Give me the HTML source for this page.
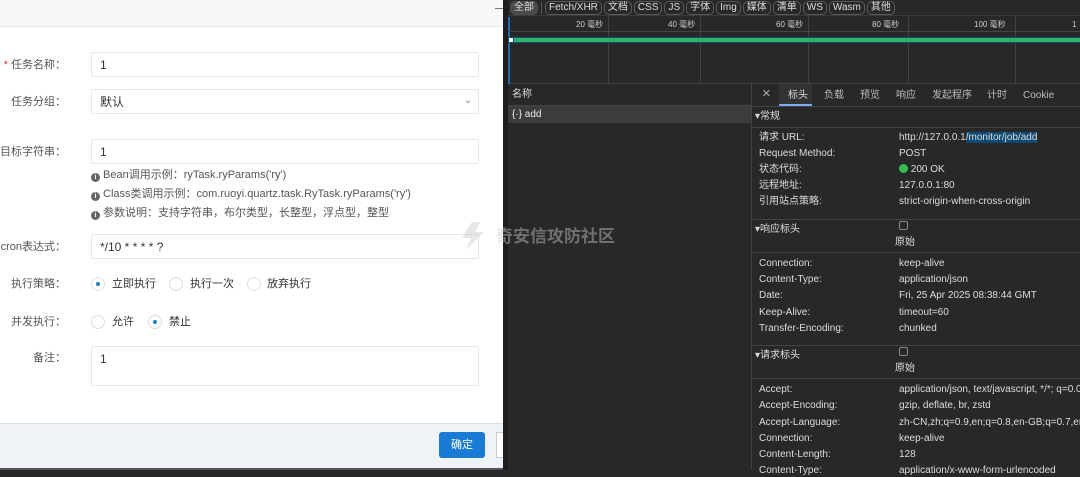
<!DOCTYPE html>
<html><head><meta charset="utf-8"><style>
*{margin:0;padding:0;box-sizing:border-box}
body{width:1080px;height:470px;overflow:hidden;position:relative;font-family:"Liberation Sans","Noto Sans CJK SC",sans-serif;background:#282828;line-height:13px}
.a{position:absolute;white-space:nowrap}
#L{position:absolute;left:0;top:0;width:503px;height:470px;background:#fff}
.lbl{position:absolute;right:437px;font-size:11px;color:#555;width:120px;text-align:right;line-height:14px}
.inp{position:absolute;left:91px;width:388px;height:25px;border:1px solid #e5e6e7;border-radius:2px;font-size:12px;color:#333;padding:5px 8px;line-height:14px}
.hint{position:absolute;left:91px;font-size:11px;color:#555;line-height:13px}
.hint b{display:inline-block;width:9px;height:9px;border-radius:50%;background:#666;color:#fff;font-size:7px;text-align:center;line-height:9px;margin-right:3px;vertical-align:-1px}
.rad{position:absolute;width:14px;height:14px;border:1px solid #ddd;border-radius:50%}
.rad.on::after{content:"";position:absolute;left:4px;top:4px;width:4px;height:4px;border-radius:50%;background:#1c84c6}
.rt{position:absolute;font-size:11px;color:#333;line-height:14px}
#D{position:absolute;left:508px;top:0;width:572px;height:470px;background:#282828;color:#ddd;font-size:10px}
.chip{display:inline-block;border:1px solid #5a5a5a;border-radius:5px;padding:0 3px;height:14px;line-height:12px;margin-right:2px;font-size:10px;color:#ddd;vertical-align:top}
.k,.v{position:absolute;color:#ddd;line-height:12px}
.k{left:7px}.v{left:147px}
.sec{position:absolute;left:0;width:329px;border-top:1px solid #444}
.tab{position:absolute;top:6px;line-height:12px}
</style></head><body>
<div id="L">
 <div class="a" style="left:0;top:0;width:503px;height:27px;background:#f8f8f8;border-bottom:1px solid #e7e7e7"></div>
 <div class="a" style="left:495px;top:8px;width:8px;height:1px;background:#777"></div>
 <div class="lbl" style="top:58px"><span style="color:#e33">* </span>任务名称：</div>
 <div class="inp" style="top:52px">1</div>
 <div class="lbl" style="top:95px">任务分组：</div>
 <div class="inp" style="top:89px">默认<span style="position:absolute;right:6px;top:4px;color:#888;font-size:10px">&#8964;</span></div>
 <div class="lbl" style="top:145px">用目标字符串：</div>
 <div class="inp" style="top:139px">1</div>
 <div class="hint" style="top:169px"><b>i</b>Bean调用示例：ryTask.ryParams('ry')</div>
 <div class="hint" style="top:188px"><b>i</b>Class类调用示例：com.ruoyi.quartz.task.RyTask.ryParams('ry')</div>
 <div class="hint" style="top:207px"><b>i</b>参数说明：支持字符串，布尔类型，长整型，浮点型，整型</div>
 <div class="lbl" style="top:240px">cron表达式：</div>
 <div class="inp" style="top:234px">*/10 * * * * ?</div>
 <div class="lbl" style="top:277px">执行策略：</div>
 <div class="rad on" style="left:91px;top:277px"></div><div class="rt" style="left:112px;top:277px">立即执行</div>
 <div class="rad" style="left:169px;top:277px"></div><div class="rt" style="left:190px;top:277px">执行一次</div>
 <div class="rad" style="left:247px;top:277px"></div><div class="rt" style="left:267px;top:277px">放弃执行</div>
 <div class="lbl" style="top:315px">并发执行：</div>
 <div class="rad" style="left:91px;top:315px"></div><div class="rt" style="left:112px;top:315px">允许</div>
 <div class="rad on" style="left:148px;top:315px"></div><div class="rt" style="left:169px;top:315px">禁止</div>
 <div class="lbl" style="top:351px">备注：</div>
 <div class="inp" style="top:346px;height:40px">1</div>
 <div class="a" style="left:0;top:423px;width:503px;height:45px;background:#eff2f6;border-top:1px solid #ddd"></div>
 <div class="a" style="left:439px;top:432px;width:46px;height:26px;background:#1a7bd5;border-radius:3px;color:#fff;font-size:11px;text-align:center;line-height:26px">确定</div>
 <div class="a" style="left:496px;top:432px;width:8px;height:26px;background:#fff;border:1px solid #ccc"></div>
 <div class="a" style="left:0;top:468px;width:503px;height:2px;background:#555"></div>
</div>
<div class="a" style="left:503px;top:0;width:5px;height:470px;background:#1e1e1e"></div>
<div id="D">
 <div class="a" style="left:0;top:0;width:572px;height:16px;background:#282828;border-bottom:1px solid #3a3a3a;padding:1px 0 0 2px;line-height:14px">
  <span class="chip" style="background:#4a4a4a;border-color:#4a4a4a">全部</span><span style="display:inline-block;width:1px;height:12px;background:#555;margin:1px 3px 0 1px;vertical-align:top"></span><span class="chip">Fetch/XHR</span><span class="chip">文档</span><span class="chip">CSS</span><span class="chip">JS</span><span class="chip">字体</span><span class="chip">Img</span><span class="chip">媒体</span><span class="chip">清单</span><span class="chip">WS</span><span class="chip">Wasm</span><span class="chip">其他</span>
 </div>
 <div class="a" style="left:0;top:17px;width:572px;height:67px;border-bottom:1px solid #444">
  <div class="a" style="left:0;top:0;width:2px;height:67px;background:#1a6fb5"></div>
  <div class="a" style="left:100px;top:0;width:1px;height:67px;background:#444"></div>
  <div class="a" style="left:192px;top:0;width:1px;height:67px;background:#444"></div>
  <div class="a" style="left:300px;top:0;width:1px;height:67px;background:#444"></div>
  <div class="a" style="left:400px;top:0;width:1px;height:67px;background:#444"></div>
  <div class="a" style="left:507px;top:0;width:1px;height:67px;background:#444"></div>
  <div class="a" style="left:0;top:0;width:572px;height:15px;border-bottom:1px solid #444;font-size:8px;color:#ccc;line-height:10px">
   <span class="a" style="left:68px;top:3px">20 毫秒</span><span class="a" style="left:160px;top:3px">40 毫秒</span><span class="a" style="left:268px;top:3px">60 毫秒</span><span class="a" style="left:364px;top:3px">80 毫秒</span><span class="a" style="left:466px;top:3px">100 毫秒</span><span class="a" style="left:564px;top:3px">1</span>
  </div>
  <div class="a" style="left:0;top:20px;width:572px;height:6px;background:#164f7a"></div>
  <div class="a" style="left:6px;top:21px;width:566px;height:4px;background:#2eb36b"></div>
  <div class="a" style="left:1px;top:21px;width:4px;height:4px;background:#fff"></div>
 </div>
 <div class="a" style="left:0;top:84px;width:243px;height:22px;border-bottom:1px solid #444;padding:5px 4px;color:#ddd;line-height:12px">名称</div>
 <div class="a" style="left:0;top:106px;width:243px;height:17px;background:#3c3c3c;padding:3px 4px;color:#eee;line-height:12px">{·} add</div>
 <div class="a" style="left:243px;top:84px;width:1px;height:386px;background:#444"></div>
 <div class="a" style="left:244px;top:84px;width:328px;height:386px;font-size:10px">
  <div class="a" style="left:0;top:0;width:328px;height:23px;border-bottom:1px solid #444;color:#bbb">
   <span class="a" style="left:10px;top:2px;font-size:15px;color:#aaa;line-height:16px">×</span>
   <span class="a" style="left:27px;top:0;width:33px;height:22px;background:#333;border-bottom:2px solid #7cacf8"></span>
   <span class="tab" style="left:36px;color:#ddd">标头</span><span class="tab" style="left:72px">负载</span><span class="tab" style="left:108px">预览</span><span class="tab" style="left:144px">响应</span><span class="tab" style="left:180px">发起程序</span><span class="tab" style="left:235px">计时</span><span class="tab" style="left:271px">Cookie</span>
  </div>
  <div class="k" style="left:3px;top:27px">▾常规</div>
  <div class="sec" style="top:43px"></div>
  <div class="k" style="top:48px">请求 URL:</div><div class="v" style="top:48px">http://127.0.0.1<span style="background:#0e4a73">/monitor/job/add</span></div>
  <div class="k" style="top:64px">Request Method:</div><div class="v" style="top:64px">POST</div>
  <div class="k" style="top:80px">状态代码:</div><div class="v" style="top:80px"><span style="display:inline-block;width:9px;height:9px;border-radius:50%;background:#2fbe50;vertical-align:-1px"></span> 200 OK</div>
  <div class="k" style="top:96px">远程地址:</div><div class="v" style="top:96px">127.0.0.1:80</div>
  <div class="k" style="top:112px">引用站点策略:</div><div class="v" style="top:112px">strict-origin-when-cross-origin</div>
  <div class="sec" style="top:135px"></div>
  <div class="k" style="left:3px;top:140px">▾响应标头</div>
  <div class="a" style="left:147px;top:137px;width:9px;height:9px;border:1px solid #888;border-radius:2px"></div>
  <div class="k" style="left:143px;top:153px">原始</div>
  <div class="sec" style="top:168px"></div>
  <div class="k" style="top:174px">Connection:</div><div class="v" style="top:174px">keep-alive</div>
  <div class="k" style="top:190px">Content-Type:</div><div class="v" style="top:190px">application/json</div>
  <div class="k" style="top:206px">Date:</div><div class="v" style="top:206px">Fri, 25 Apr 2025 08:38:44 GMT</div>
  <div class="k" style="top:223px">Keep-Alive:</div><div class="v" style="top:223px">timeout=60</div>
  <div class="k" style="top:239px">Transfer-Encoding:</div><div class="v" style="top:239px">chunked</div>
  <div class="sec" style="top:261px"></div>
  <div class="k" style="left:3px;top:266px">▾请求标头</div>
  <div class="a" style="left:147px;top:263px;width:9px;height:9px;border:1px solid #888;border-radius:2px"></div>
  <div class="k" style="left:143px;top:279px">原始</div>
  <div class="sec" style="top:294px"></div>
  <div class="k" style="top:300px">Accept:</div><div class="v" style="top:300px">application/json, text/javascript, */*; q=0.01</div>
  <div class="k" style="top:316px">Accept-Encoding:</div><div class="v" style="top:316px">gzip, deflate, br, zstd</div>
  <div class="k" style="top:333px">Accept-Language:</div><div class="v" style="top:333px">zh-CN,zh;q=0.9,en;q=0.8,en-GB;q=0.7,en</div>
  <div class="k" style="top:349px">Connection:</div><div class="v" style="top:349px">keep-alive</div>
  <div class="k" style="top:365px">Content-Length:</div><div class="v" style="top:365px">128</div>
  <div class="k" style="top:381px">Content-Type:</div><div class="v" style="top:381px">application/x-www-form-urlencoded</div>
 </div>
</div>
<svg class="a" style="left:458px;top:220px" width="32" height="32" viewBox="0 0 32 32"><path d="M14 2 L4 18 L13 18 L8 30 L26 12 L17 12 L22 2 Z" fill="rgba(200,200,200,.45)"/></svg>
<div class="a" style="left:496px;top:227px;font-size:17px;color:rgba(200,200,200,.45);font-weight:bold;line-height:20px">奇安信攻防社区</div>
</body></html>
